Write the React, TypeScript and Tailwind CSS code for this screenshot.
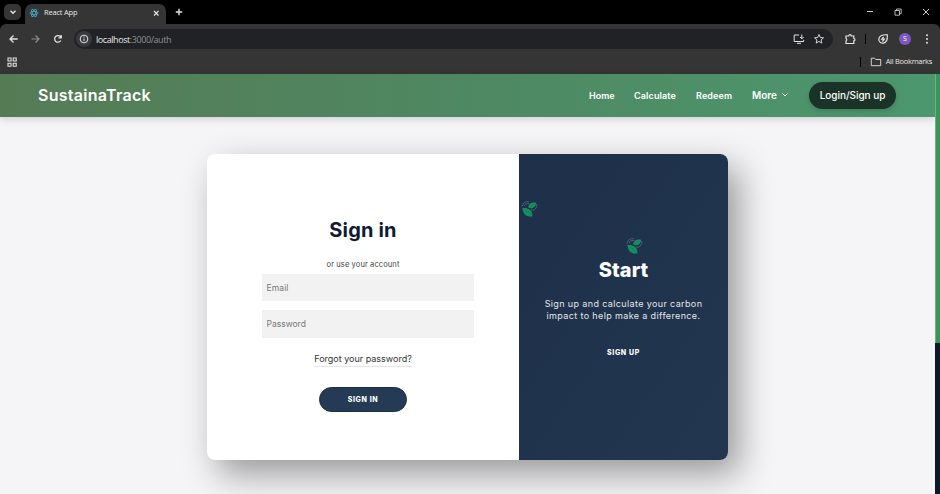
import type { ReactNode } from "react";

function Leaf() {
  return (
    <svg className="block h-[17px] w-[17px]" viewBox="0 0 17 17" fill="none">
      <path d="M1 6.500C1.500 3 4.500 1 8 1.800M3 6c1-2 2.500-2.700 5-2.500M14 9c1.800-1.500 2.200-3 1.500-5M10 9.800c1.500.7 3 .5 4-.8" stroke="#53617a" strokeWidth="1" />
      <path d="M7.300 7.600C7.300 4 10 2.200 15 2.700 15.200 6.800 11.500 9.500 7.300 7.600Z" fill="#149160" />
      <path d="M1.500 8C7 7.500 12 10 11.300 16.500 5.500 17.200 1.800 14.500 1.500 8Z" fill="#149160" />
      <path d="M4 10.300c2.500 1 4.500 2.800 6 4.800M9.500 6.700c1.500-.7 2.500-1.400 3.600-2.500" stroke="#0c7553" strokeWidth=".5" />
    </svg>
  );
}

function Ico({ children, className = "" }: { children: ReactNode; className?: string }) {
  return (
    <svg viewBox="0 0 12 12" fill="none" stroke="#e3e3e3" strokeWidth="1.200" className={`block h-3 w-3 shrink-0 ${className}`}>
      {children}
    </svg>
  );
}

function Browser() {
  return (
    <div className="h-[74px] bg-black font-['Open_Sans','Noto_Sans',sans-serif] text-[#e8e8e8]">
      <div className="flex h-[24px] items-start pl-[4px] pt-[4px]">
        <div className="flex h-[16px] w-[17px] items-center justify-center rounded-[5px] bg-[#353535]">
          <Ico><path d="M3.500 4.700 6 7.200l2.500-2.500" strokeWidth="1.400" /></Ico>
        </div>
        <div className="ml-[4px] flex h-[20px] w-[141px] items-center rounded-t-[7px] bg-[#353535] pb-[2px] pl-[4px]">
          <Ico className="h-[10px]! w-[10px]!">
            <g stroke="#3fb4cf" strokeWidth=".9">
              <ellipse cx="6" cy="6" rx="5" ry="2" />
              <ellipse cx="6" cy="6" rx="5" ry="2" transform="rotate(60 6 6)" />
              <ellipse cx="6" cy="6" rx="5" ry="2" transform="rotate(120 6 6)" />
            </g>
          </Ico>
          <span className="ml-[5px] w-[100px] text-[7.500px] leading-none tracking-[-0.200px]">React App</span>
          <Ico className="ml-[6px]"><path d="m4 4 4.500 4.500M8.500 4 4 8.500" /></Ico>
        </div>
        <Ico className="ml-[7px] mt-[2px]"><path d="M6 2.800v6.400M2.800 6h6.400" strokeWidth="1.400" /></Ico>
        <div className="ml-auto flex gap-[16px] pr-[8px] pt-[2px]">
          <Ico><path d="M3 5.500h6" strokeWidth=".9" /></Ico>
          <Ico><path d="M3 4.500h4.500v4.700H3zM4.600 4.500V3h4.600v4.600H7.500" strokeWidth=".8" /></Ico>
          <Ico><path d="m3 3 6 6M9 3 3 9" strokeWidth=".9" /></Ico>
        </div>
      </div>
      <div className="flex h-[29px] items-center rounded-t-[6px] bg-[#353535] pl-[8px]">
        <Ico><path d="M9.700 6H2M5.500 2.500 2 6l3.500 3.500" strokeWidth="1.300" /></Ico>
        <Ico className="ml-[10px] opacity-50"><path d="M1.500 6H9M5.500 2.500 9 6 5.500 9.500" /></Ico>
        <Ico className="ml-[10px]"><path d="M8.800 7.500a3.300 3.300 0 1 1 .1-3M9.200 2v2.800H6.400" strokeWidth="1.300" /></Ico>
        <div className="ml-[10px] flex h-[20px] w-[759px] items-center rounded-full bg-[#202226] pl-[2px]">
          <div className="flex h-[16px] w-[16px] items-center justify-center rounded-full bg-[#393a3d]">
            <Ico className="h-[10px]! w-[10px]!"><circle cx="6" cy="6" r="4.600" /><path d="M6 5.400v3M6 3.300v1.100" /></Ico>
          </div>
          <span className="ml-[4px] pt-px text-[9px] leading-none tracking-[-0.430px] text-[#8d9094]"><span className="text-[#e8e8e8]">localhost</span>:3000/auth</span>
          <Ico className="ml-auto"><path d="M6 2H1.200v6.500h9.500V6.800M4 10.300h4M8.800 1.500v4M7 4l1.800 1.800L10.600 4" strokeWidth="1" /></Ico>
          <Ico className="ml-[8px] mr-[8px]"><path d="m6 1.500 1.300 3 3.200.3-2.400 2.100.7 3.200L6 8.400l-2.800 1.700.7-3.200-2.400-2.100 3.200-.3z" strokeWidth=".9" /></Ico>
        </div>
        <Ico className="ml-[11px]"><path d="M2 3h2.700a1.300 1.300 0 0 1 2.600 0h2.500v2.500a1.200 1.200 0 0 1 0 2.400v2.600H2V8a1.400 1.400 0 0 0 0-2.500z" /></Ico>
        <div className="ml-[9px] h-[10px] w-px bg-black" />
        <Ico className="ml-[11px]"><path d="M10.300 1.800C5 1.500 1.800 3 1.800 6.300s2.700 4 4.500 3.800c3.700-.3 4.300-4 4-8.300ZM6.700 3.800 4.800 6.200h2.500L5.400 8.500" /></Ico>
        <div className="ml-[10px] flex h-[12px] w-[12px] items-center justify-center rounded-full bg-[#7e57c2] text-[7px] leading-none text-white">S</div>
        <Ico className="ml-[10px]"><g fill="#e3e3e3" stroke="none"><circle cx="6" cy="2.200" r="1" /><circle cx="6" cy="6" r="1" /><circle cx="6" cy="9.800" r="1" /></g></Ico>
      </div>
      <div className="flex h-[21px] items-center bg-[#353535] pb-[4px] pl-[6px] pr-[8px]">
        <Ico><path d="M2 2h3v3H2zM7.200 2h3v3h-3zM2 7.200h3v3H2zM7.200 7.200h3v3h-3z" strokeWidth="1.100" /></Ico>
        <div className="ml-auto h-[10px] w-px bg-black" />
        <Ico className="ml-[9px]"><path d="M1.300 2.200h3.200l1.200 1.300h5v6.200H1.300z" strokeWidth=".9" /></Ico>
        <span className="ml-[4px] whitespace-nowrap text-[7.500px] leading-none tracking-[-0.280px]">All Bookmarks</span>
      </div>
    </div>
  );
}

export default function App() {
  return (
    <div className="h-[494px] w-[940px] overflow-hidden bg-[#f5f5f7] font-['Inter',sans-serif]">
      <Browser />
      <div className="flex h-[420px]">
        <main className="w-[935px]">
          <header className="flex h-[43px] items-center bg-linear-to-r from-[#557b55] via-[#4e8862] to-[#4c976e] pb-px pl-[38px] text-white shadow-[0_2px_8px_rgba(0,0,0,0.16)]">
            <div className="text-[16px] font-semibold leading-none tracking-[0.270px]">SustainaTrack</div>
            <nav className="ml-auto flex items-center whitespace-nowrap text-[9px] font-semibold leading-none">
              <span className="w-[45px]">Home</span>
              <span className="w-[62px] tracking-[0.120px]">Calculate</span>
              <span className="w-[56px] tracking-[0.120px]">Redeem</span>
              <span className="w-[28px] text-[10px]">More</span>
              <svg className="ml-[1px] h-[8px] w-[8px]" viewBox="0 0 8 8" fill="none" stroke="white"><path d="m1.500 2.500 2.500 2.500 2.500-2.500" /></svg>
              <button className="ml-[20px] mr-[39px] h-[27px] w-[87px] rounded-full bg-[#1a3326] text-[10px] font-medium tracking-[-0.050px] shadow-[0_2px_5px_rgba(0,0,0,0.15)]">Login/Sign up</button>
            </nav>
          </header>
          <div className="ml-[207px] mt-[37px] flex h-[306px] w-[521px] overflow-hidden rounded-[8px] bg-white shadow-[11px_14px_34px_rgba(0,0,0,0.38)]">
            <form className="flex w-[312px] flex-col items-center">
              <h1 className="mt-[64px] text-[20px] font-bold leading-[24px] tracking-[0.150px] text-[#101b34]">Sign in</h1>
              <p className="mt-[16px] text-[7.500px] leading-[13px] tracking-[0.110px] text-[#444]">or use your account</p>
              <input className="ml-[9px] mt-[3px] h-[27px] w-[212px] bg-[#f2f2f2] px-[5px] text-[8.500px] tracking-[0.100px] placeholder:text-[#777]" placeholder="Email" />
              <input className="ml-[9px] mt-[9px] h-[28px] w-[212px] bg-[#f2f2f2] px-[5px] text-[8.500px] placeholder:text-[#777]" placeholder="Password" />
              <a className="mt-[13px] h-[16px] border-b border-[#e5e5e5] text-[9px] leading-[15px] text-[#333]">Forgot your password?</a>
              <button type="button" className="mt-[20px] h-[25px] w-[88px] rounded-full border border-[#1d3047] bg-[#243a55] pt-px text-[7px] font-extrabold tracking-[0.650px] text-white">SIGN IN</button>
            </form>
            <aside className="flex w-[209px] flex-col items-center bg-linear-to-br from-[#1e2f49] to-[#22374f] text-white">
              <div className="mt-[46px] self-start pl-[2px]"><Leaf /></div>
              <div className="ml-[21px] mt-[20px]"><Leaf /></div>
              <h2 className="mt-[4px] text-[20px] font-extrabold leading-[24px] tracking-[0.100px]">Start</h2>
              <p className="mt-[16px] whitespace-nowrap text-center text-[9px] leading-[12px] tracking-[0.370px] text-[#e4e7eb]">Sign up and calculate your carbon<br />impact to help make a difference.</p>
              <button type="button" className="mt-[24px] text-[7px] font-extrabold leading-[14px] tracking-[0.650px]">SIGN UP</button>
            </aside>
          </div>
        </main>
        <div className="w-[5px] bg-[#101827]"><div className="h-[269px] border-l border-[#6fae86] bg-[#38965b]" /></div>
      </div>
    </div>
  );
}
